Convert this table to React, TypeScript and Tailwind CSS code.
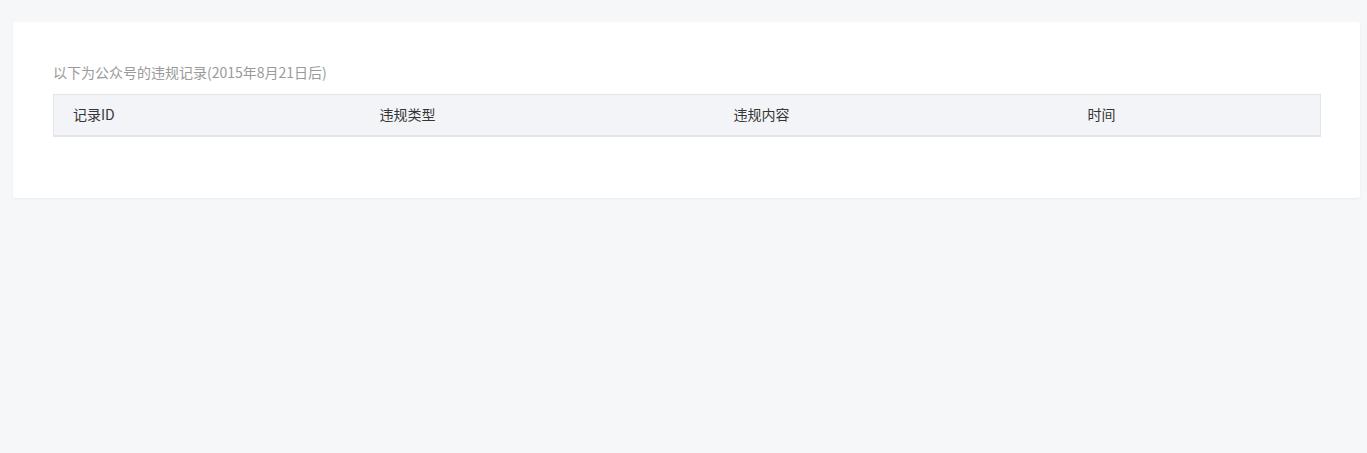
export default function App() {
  const columns = [
    { label: '记录ID', width: 'w-[307px]' },
    { label: '违规类型', width: 'w-[354px]' },
    { label: '违规内容', width: 'w-[354px]' },
    { label: '时间', width: 'w-[252px]' },
  ]

  return (
    <div
      className="min-h-[453px] bg-[#f6f7f9] pl-[13px] pr-[7px] pt-[22px]"
      style={{ fontFamily: '"Noto Sans CJK SC", "Noto Sans", sans-serif' }}
    >
      <div className="rounded-[3px] bg-white px-[40px] pb-[61px] pt-[39px] shadow-[0_1px_3px_rgba(0,0,0,0.05)]">
        <p className="mb-[11px] text-[14px] leading-[22px] text-[#9a9a9a]">
          以下为公众号的违规记录(2015年8月21日后)
        </p>
        <table className="w-full table-fixed border-collapse">
          <thead>
            <tr className="h-[41px] border border-b-2 border-[#e4e5ea] bg-[#f3f4f8]">
              {columns.map((col) => (
                <th
                  key={col.label}
                  className={`${col.width} pl-[19px] pr-[20px] text-left text-[14px] font-normal text-[#353535]`}
                >
                  {col.label}
                </th>
              ))}
            </tr>
          </thead>
        </table>
      </div>
    </div>
  )
}
